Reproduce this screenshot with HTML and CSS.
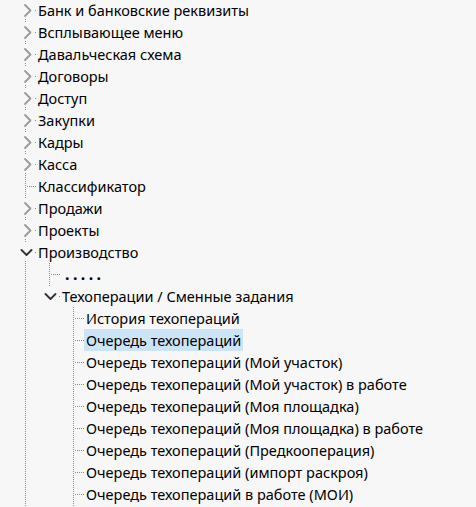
FILE: index.html
```html
<!DOCTYPE html>
<html lang="ru">
<head>
<meta charset="utf-8">
<title>Дерево</title>
<link rel="stylesheet" href="styles.css">
</head>
<body>
<div class="tree">
  <div class="row"><span class="cell v h"><svg class="tg" viewBox="0 0 16 18" width="16" height="18"><rect width="16" height="18"/><polyline class="col" points="6,4 11.5,9.5 6,15"/></svg></span><span class="label">Банк и банковские реквизиты</span></div>
  <div class="row"><span class="cell v h"><svg class="tg" viewBox="0 0 16 18" width="16" height="18"><rect width="16" height="18"/><polyline class="col" points="6,4 11.5,9.5 6,15"/></svg></span><span class="label">Всплывающее меню</span></div>
  <div class="row"><span class="cell v h"><svg class="tg" viewBox="0 0 16 18" width="16" height="18"><rect width="16" height="18"/><polyline class="col" points="6,4 11.5,9.5 6,15"/></svg></span><span class="label">Давальческая схема</span></div>
  <div class="row"><span class="cell v h"><svg class="tg" viewBox="0 0 16 18" width="16" height="18"><rect width="16" height="18"/><polyline class="col" points="6,4 11.5,9.5 6,15"/></svg></span><span class="label">Договоры</span></div>
  <div class="row"><span class="cell v h"><svg class="tg" viewBox="0 0 16 18" width="16" height="18"><rect width="16" height="18"/><polyline class="col" points="6,4 11.5,9.5 6,15"/></svg></span><span class="label">Доступ</span></div>
  <div class="row"><span class="cell v h"><svg class="tg" viewBox="0 0 16 18" width="16" height="18"><rect width="16" height="18"/><polyline class="col" points="6,4 11.5,9.5 6,15"/></svg></span><span class="label">Закупки</span></div>
  <div class="row"><span class="cell v h"><svg class="tg" viewBox="0 0 16 18" width="16" height="18"><rect width="16" height="18"/><polyline class="col" points="6,4 11.5,9.5 6,15"/></svg></span><span class="label">Кадры</span></div>
  <div class="row"><span class="cell v h"><svg class="tg" viewBox="0 0 16 18" width="16" height="18"><rect width="16" height="18"/><polyline class="col" points="6,4 11.5,9.5 6,15"/></svg></span><span class="label">Касса</span></div>
  <div class="row"><span class="cell v h"></span><span class="label">Классификатор</span></div>
  <div class="row"><span class="cell v h"><svg class="tg" viewBox="0 0 16 18" width="16" height="18"><rect width="16" height="18"/><polyline class="col" points="6,4 11.5,9.5 6,15"/></svg></span><span class="label">Продажи</span></div>
  <div class="row"><span class="cell v h"><svg class="tg" viewBox="0 0 16 18" width="16" height="18"><rect width="16" height="18"/><polyline class="col" points="6,4 11.5,9.5 6,15"/></svg></span><span class="label">Проекты</span></div>
  <div class="row"><span class="cell v h"><svg class="tg" viewBox="0 0 16 18" width="16" height="18"><rect width="16" height="18"/><polyline class="exp" points="2.5,7 7.5,12 12.5,7"/></svg></span><span class="label">Производство</span></div>
  <div class="row"><span class="cell v"></span><span class="cell v h"></span><span class="label dots">.....</span></div>
  <div class="row"><span class="cell v"></span><span class="cell v top h"><svg class="tg" viewBox="0 0 16 18" width="16" height="18"><rect width="16" height="18"/><polyline class="exp" points="2.5,7 7.5,12 12.5,7"/></svg></span><span class="label">Техоперации / Сменные задания</span></div>
  <div class="row"><span class="cell v"></span><span class="cell"></span><span class="cell v h"></span><span class="label">История техопераций</span></div>
  <div class="row"><span class="cell v"></span><span class="cell"></span><span class="cell v h"></span><span class="label selected">Очередь техопераций</span></div>
  <div class="row"><span class="cell v"></span><span class="cell"></span><span class="cell v h"></span><span class="label">Очередь техопераций (Мой участок)</span></div>
  <div class="row"><span class="cell v"></span><span class="cell"></span><span class="cell v h"></span><span class="label">Очередь техопераций (Мой участок) в работе</span></div>
  <div class="row"><span class="cell v"></span><span class="cell"></span><span class="cell v h"></span><span class="label">Очередь техопераций (Моя площадка)</span></div>
  <div class="row"><span class="cell v"></span><span class="cell"></span><span class="cell v h"></span><span class="label">Очередь техопераций (Моя площадка) в работе</span></div>
  <div class="row"><span class="cell v"></span><span class="cell"></span><span class="cell v h"></span><span class="label">Очередь техопераций (Предкооперация)</span></div>
  <div class="row"><span class="cell v"></span><span class="cell"></span><span class="cell v h"></span><span class="label">Очередь техопераций (импорт раскроя)</span></div>
  <div class="row"><span class="cell v"></span><span class="cell"></span><span class="cell v h"></span><span class="label">Очередь техопераций в работе (МОИ)</span></div>
  <div class="row"><span class="cell v"></span><span class="cell"></span><span class="cell v"></span><span class="label"></span></div>
</div>
</body>
</html>
```
FILE: styles.css
```css
html, body {
  margin: 0;
  padding: 0;
  background: #f7f7f7;
  overflow: hidden;
}

body {
  font-family: "Noto Sans", "Open Sans", "DejaVu Sans", sans-serif;
  font-size: 14.5px;
  color: #000;
}

.tree {
  margin-top: -1px;
  padding-left: 13px;
  display: flex;
  flex-direction: column;
}

.row {
  display: flex;
  align-items: center;
  height: 22px;
}

.cell {
  --vl: none;
  --hl: none;
  --vy: 0px;
  --vh: 22px;
  flex: none;
  width: 24px;
  height: 22px;
  display: flex;
  align-items: center;
  justify-content: center;
  background-image: var(--vl), var(--hl);
  background-repeat: no-repeat;
  background-position: 12px var(--vy), 13px 11px;
  background-size: 1px var(--vh), 12px 1px;
}

.v {
  --vl: repeating-linear-gradient(to bottom, #8c8c8c 0 1px, transparent 1px 2px);
}

.h {
  --hl: repeating-linear-gradient(to right, transparent 0 1px, #8c8c8c 1px 2px);
}

.top {
  --vh: 11px;
}

.tg {
  display: block;
  margin-left: 4px;
}

.tg rect {
  fill: #f7f7f7;
}

.tg polyline {
  fill: none;
  stroke-linecap: round;
  stroke-linejoin: round;
}

.tg .col {
  stroke: #9a9a9a;
  stroke-width: 1.8;
}

.tg .exp {
  stroke: #333;
  stroke-width: 1.9;
}

.label {
  margin-left: -1px;
  padding: 0 2px;
  height: 22px;
  line-height: 22px;
  white-space: nowrap;
}

.selected {
  background: #cce4f7;
}

.dots {
  font-size: 16px;
  font-weight: bold;
  letter-spacing: 3.4px;
  padding-left: 5px;
}
```
